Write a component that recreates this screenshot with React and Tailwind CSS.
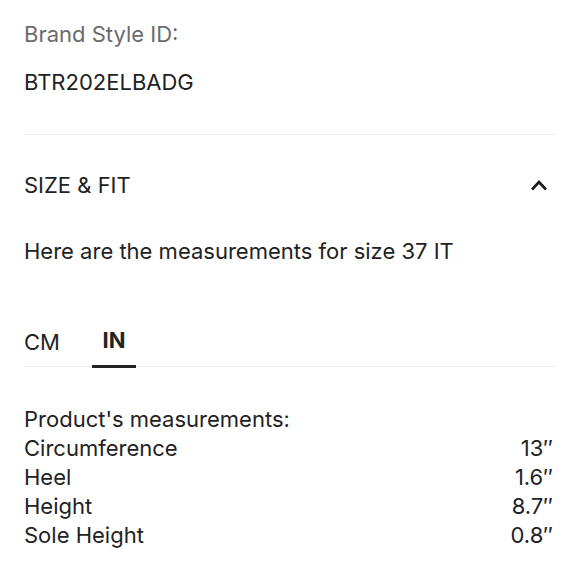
import React from "react";
import { useState } from "react";

const rows = [
  { label: "Circumference", value: "13\u2033" },
  { label: "Heel", value: "1.6\u2033" },
  { label: "Height", value: "8.7\u2033" },
  { label: "Sole Height", value: "0.8\u2033" },
];

const App = () => {
  const [unit, setUnit] = useState("IN");

  return (
    <div
      className="w-[580px] h-[580px] bg-white px-6 text-[#222222] overflow-hidden"
      style={{ fontFamily: "Inter, 'Noto Sans', sans-serif" }}
    >
      <div className="pt-[20px]">
        <p className="text-[22px] leading-[28px] text-[#6b6b6b]">Brand Style ID:</p>
        <p className="mt-5 text-[22px] leading-[28px]">BTR202ELBADG</p>
      </div>

      <div className="mt-[38px] h-px bg-[#eeeeee]" />

      <div className="mt-[36px] flex items-center justify-between">
        <h3 className="text-[22px] leading-[28px]">SIZE &amp; FIT</h3>
        <svg width="18" height="12" viewBox="0 0 18 12" className="mr-[8px]">
          <polyline
            points="2,10.5 9,3 16,10.5"
            fill="none"
            stroke="#1a1a1a"
            strokeWidth="2.6"
          />
        </svg>
      </div>

      <p className="mt-[38px] text-[22px] leading-[28px]">
        Here are the measurements for size 37 IT
      </p>

      <div className="mt-[61px] relative flex">
        <button
          onClick={() => setUnit("CM")}
          className={
            "relative w-[68px] pb-[11px] text-left text-[22px] leading-[28px] " +
            (unit === "CM" ? "font-bold border-b-[3px] border-[#222222]" : "")
          }
        >
          CM
        </button>
        <button
          onClick={() => setUnit("IN")}
          className={
            "relative z-10 w-[44px] pb-[11px] text-[22px] leading-[28px] text-center " +
            (unit === "IN" ? "font-bold border-b-[3px] border-[#222222]" : "")
          }
        >
          IN
        </button>
        <div className="absolute left-0 right-0 bottom-[1px] h-px bg-[#eeeeee]" />
      </div>

      <div className="mt-[37px] text-[22px] leading-[29px]">
        <p>Product's measurements:</p>
        {rows.map((row, index) => (
          <div className="flex justify-between pr-[3px]" key={index}>
            <span>{row.label}</span>
            <span>{row.value}</span>
          </div>
        ))}
      </div>
    </div>
  );
};

export default App;
